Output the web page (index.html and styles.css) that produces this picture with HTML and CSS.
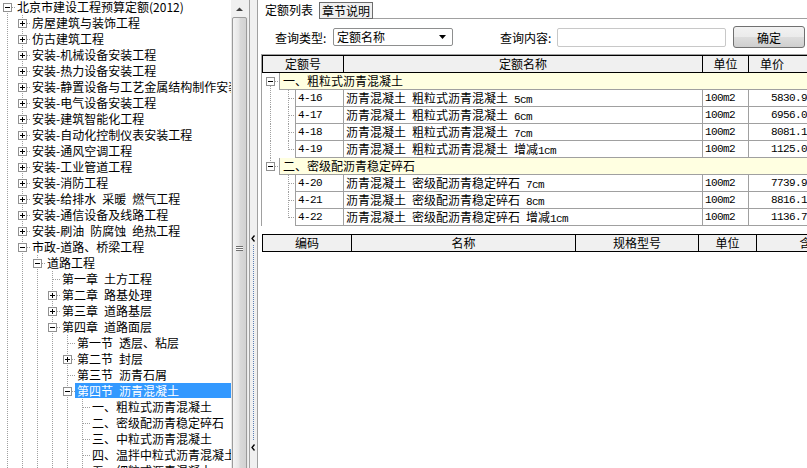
FILE: index.html
```html
<!DOCTYPE html>
<html lang="zh-CN">
<head>
<meta charset="utf-8">
<title>定额查询</title>
<link rel="stylesheet" href="styles.css">
</head>
<body>
<div class="app">
  <div class="side">
    <div class="tree">
      <div class="tr"><i class="c r"><b class="bx m"></b></i><span class="lb">北京市建设工程预算定额(2012)</span></div>
      <div class="tr"><i class="c v"></i><i class="c t"><b class="bx p"></b></i><span class="lb">房屋建筑与装饰工程</span></div>
      <div class="tr"><i class="c v"></i><i class="c t"><b class="bx p"></b></i><span class="lb">仿古建筑工程</span></div>
      <div class="tr"><i class="c v"></i><i class="c t"><b class="bx p"></b></i><span class="lb">安装-机械设备安装工程</span></div>
      <div class="tr"><i class="c v"></i><i class="c t"><b class="bx p"></b></i><span class="lb">安装-热力设备安装工程</span></div>
      <div class="tr"><i class="c v"></i><i class="c t"><b class="bx p"></b></i><span class="lb">安装-静置设备与工艺金属结构制作安装工程</span></div>
      <div class="tr"><i class="c v"></i><i class="c t"><b class="bx p"></b></i><span class="lb">安装-电气设备安装工程</span></div>
      <div class="tr"><i class="c v"></i><i class="c t"><b class="bx p"></b></i><span class="lb">安装-建筑智能化工程</span></div>
      <div class="tr"><i class="c v"></i><i class="c t"><b class="bx p"></b></i><span class="lb">安装-自动化控制仪表安装工程</span></div>
      <div class="tr"><i class="c v"></i><i class="c t"><b class="bx p"></b></i><span class="lb">安装-通风空调工程</span></div>
      <div class="tr"><i class="c v"></i><i class="c t"><b class="bx p"></b></i><span class="lb">安装-工业管道工程</span></div>
      <div class="tr"><i class="c v"></i><i class="c t"><b class="bx p"></b></i><span class="lb">安装-消防工程</span></div>
      <div class="tr"><i class="c v"></i><i class="c t"><b class="bx p"></b></i><span class="lb">安装-给排水 采暖 燃气工程</span></div>
      <div class="tr"><i class="c v"></i><i class="c t"><b class="bx p"></b></i><span class="lb">安装-通信设备及线路工程</span></div>
      <div class="tr"><i class="c v"></i><i class="c t"><b class="bx p"></b></i><span class="lb">安装-刷油 防腐蚀 绝热工程</span></div>
      <div class="tr"><i class="c v"></i><i class="c t"><b class="bx m"></b></i><span class="lb">市政-道路、桥梁工程</span></div>
      <div class="tr"><i class="c v"></i><i class="c v"></i><i class="c t"><b class="bx m"></b></i><span class="lb">道路工程</span></div>
      <div class="tr"><i class="c v"></i><i class="c v"></i><i class="c v"></i><i class="c t"></i><span class="lb">第一章 土方工程</span></div>
      <div class="tr"><i class="c v"></i><i class="c v"></i><i class="c v"></i><i class="c t"><b class="bx p"></b></i><span class="lb">第二章 路基处理</span></div>
      <div class="tr"><i class="c v"></i><i class="c v"></i><i class="c v"></i><i class="c t"><b class="bx p"></b></i><span class="lb">第三章 道路基层</span></div>
      <div class="tr"><i class="c v"></i><i class="c v"></i><i class="c v"></i><i class="c t"><b class="bx m"></b></i><span class="lb">第四章 道路面层</span></div>
      <div class="tr"><i class="c v"></i><i class="c v"></i><i class="c v"></i><i class="c v"></i><i class="c t"></i><span class="lb">第一节 透层、粘层</span></div>
      <div class="tr"><i class="c v"></i><i class="c v"></i><i class="c v"></i><i class="c v"></i><i class="c t"><b class="bx p"></b></i><span class="lb">第二节 封层</span></div>
      <div class="tr"><i class="c v"></i><i class="c v"></i><i class="c v"></i><i class="c v"></i><i class="c t"></i><span class="lb">第三节 沥青石屑</span></div>
      <div class="tr"><i class="c v"></i><i class="c v"></i><i class="c v"></i><i class="c v"></i><i class="c t"><b class="bx m"></b></i><span class="lb sel">第四节 沥青混凝土</span></div>
      <div class="tr"><i class="c v"></i><i class="c v"></i><i class="c v"></i><i class="c v"></i><i class="c v"></i><i class="c t"></i><span class="lb">一、粗粒式沥青混凝土</span></div>
      <div class="tr"><i class="c v"></i><i class="c v"></i><i class="c v"></i><i class="c v"></i><i class="c v"></i><i class="c t"></i><span class="lb">二、密级配沥青稳定碎石</span></div>
      <div class="tr"><i class="c v"></i><i class="c v"></i><i class="c v"></i><i class="c v"></i><i class="c v"></i><i class="c t"></i><span class="lb">三、中粒式沥青混凝土</span></div>
      <div class="tr"><i class="c v"></i><i class="c v"></i><i class="c v"></i><i class="c v"></i><i class="c v"></i><i class="c t"></i><span class="lb">四、温拌中粒式沥青混凝土</span></div>
      <div class="tr"><i class="c v"></i><i class="c v"></i><i class="c v"></i><i class="c v"></i><i class="c v"></i><i class="c t"></i><span class="lb">五、细粒式沥青混凝土</span></div>
    </div>
    <div class="vscroll">
      <div class="sb-up"><svg width="7" height="4" viewBox="0 0 7 4"><path d="M0 4H7L3.5 0.5Z" fill="#404040"/></svg></div>
      <div class="sb-thumb"><span class="grip"></span></div>
    </div>
  </div>

  <div class="splitter">
    <div class="split-grip">
      <svg class="chev" width="5" height="7" viewBox="0 0 5 7"><path d="M3.5 0.5L1 3.5L3.5 6.5" stroke="#000" stroke-width="1.3" fill="none"/></svg>
      <span class="split-dots"></span>
      <svg class="chev" width="5" height="7" viewBox="0 0 5 7"><path d="M3.5 0.5L1 3.5L3.5 6.5" stroke="#000" stroke-width="1.3" fill="none"/></svg>
    </div>
  </div>

  <div class="main">
    <div class="tabs">
      <span class="tab on">定额列表</span>
      <span class="tab off">章节说明</span>
      <span class="tab-rest"></span>
    </div>

    <div class="query">
      <span class="qlabel">查询类型:</span>
      <div class="combo"><span class="combo-text">定额名称</span><svg width="7" height="4" viewBox="0 0 7 4"><path d="M0 0H7L3.5 4Z" fill="#000"/></svg></div>
      <span class="qlabel q2">查询内容:</span>
      <div class="edit"></div>
      <div class="btn">确定</div>
    </div>

    <div class="grid1">
      <div class="ghead">
        <span class="gh w-id">定额号</span>
        <span class="gh w-name">定额名称</span>
        <span class="gh w-unit">单位</span>
        <span class="gh w-price price-h">单价</span>
        <span class="gh w-fill"></span>
      </div>

      <div class="grp"><i class="gt next"><b class="bx m"></b></i><span class="gcell">一、粗粒式沥青混凝土</span></div>
      <div class="drow"><i class="dt pv mid"></i><span class="dc d-id en">4-16</span><span class="dc w-name">沥青混凝土 粗粒式沥青混凝土 <span class="en">5cm</span></span><span class="dc w-unit en">100m2</span><span class="dc w-price num en">5830.90</span><span class="dc w-fill"></span></div>
      <div class="drow"><i class="dt pv mid"></i><span class="dc d-id en">4-17</span><span class="dc w-name">沥青混凝土 粗粒式沥青混凝土 <span class="en">6cm</span></span><span class="dc w-unit en">100m2</span><span class="dc w-price num en">6956.04</span><span class="dc w-fill"></span></div>
      <div class="drow"><i class="dt pv mid"></i><span class="dc d-id en">4-18</span><span class="dc w-name">沥青混凝土 粗粒式沥青混凝土 <span class="en">7cm</span></span><span class="dc w-unit en">100m2</span><span class="dc w-price num en">8081.14</span><span class="dc w-fill"></span></div>
      <div class="drow"><i class="dt pv last"></i><span class="dc d-id en">4-19</span><span class="dc w-name">沥青混凝土 粗粒式沥青混凝土 增减<span class="en">1cm</span></span><span class="dc w-unit en">100m2</span><span class="dc w-price num en">1125.08</span><span class="dc w-fill"></span></div>

      <div class="grp"><i class="gt prev"><b class="bx m"></b></i><span class="gcell">二、密级配沥青稳定碎石</span></div>
      <div class="drow"><i class="dt mid"></i><span class="dc d-id en">4-20</span><span class="dc w-name">沥青混凝土 密级配沥青稳定碎石 <span class="en">7cm</span></span><span class="dc w-unit en">100m2</span><span class="dc w-price num en">7739.90</span><span class="dc w-fill"></span></div>
      <div class="drow"><i class="dt mid"></i><span class="dc d-id en">4-21</span><span class="dc w-name">沥青混凝土 密级配沥青稳定碎石 <span class="en">8cm</span></span><span class="dc w-unit en">100m2</span><span class="dc w-price num en">8816.19</span><span class="dc w-fill"></span></div>
      <div class="drow"><i class="dt last"></i><span class="dc d-id en">4-22</span><span class="dc w-name">沥青混凝土 密级配沥青稳定碎石 增减<span class="en">1cm</span></span><span class="dc w-unit en">100m2</span><span class="dc w-price num en">1136.70</span><span class="dc w-fill"></span></div>
    </div>

    <div class="grid2">
      <div class="ghead">
        <span class="gh w-code">编码</span>
        <span class="gh w-mname">名称</span>
        <span class="gh w-spec">规格型号</span>
        <span class="gh w-munit">单位</span>
        <span class="gh w-qty">含量</span>
        <span class="gh w-fill"></span>
      </div>
    </div>
  </div>
</div>
</body>
</html>
```

FILE: styles.css
```css
html, body {
  margin: 0;
  padding: 0;
  overflow: hidden;
}

body {
  width: 807px;
  height: 468px;
  font-family: "Noto Sans CJK SC", sans-serif;
  font-size: 12px;
  color: #000;
  background: #f0f0f0;
  word-spacing: 3.3px;
}

.app {
  display: flex;
  width: 807px;
  height: 468px;
  overflow: hidden;
}

/* ---------- left tree ---------- */
.side {
  width: 249px;
  flex: none;
  display: flex;
  background: #f0f0f0;
}

.tree {
  width: 231px;
  flex: none;
  background: #fff;
  overflow: hidden;
  padding-top: 0;
}

.tr {
  display: flex;
  height: 16px;
  line-height: 16px;
  white-space: nowrap;
}

.tr:first-child {
  margin-top: -1px;
}

.c {
  --dv: repeating-linear-gradient(to bottom, #a0a0a0 0 1px, transparent 1px 2px);
  --dh: repeating-linear-gradient(to right, #a0a0a0 0 1px, transparent 1px 2px);
  width: 15px;
  height: 16px;
  flex: none;
  box-sizing: border-box;
  padding: 4px 0 0 3px;
}

.c.v {
  background: var(--dv) 7px 0 / 1px 16px no-repeat;
}

.c.t {
  background: var(--dv) 7px 0 / 1px 16px no-repeat,
              var(--dh) 8px 8px / 7px 1px no-repeat;
}

.c.r {
  background: var(--dv) 7px 8px / 1px 8px no-repeat,
              var(--dh) 8px 8px / 7px 1px no-repeat;
}

.bx {
  display: block;
  position: relative;
  width: 9px;
  height: 9px;
  box-sizing: border-box;
  border: 1px solid #919191;
  background: #fff;
}

.bx::before {
  content: "";
  position: absolute;
  left: 1px;
  top: 3px;
  width: 5px;
  height: 1px;
  background: #000;
}

.bx.p::after {
  content: "";
  position: absolute;
  left: 3px;
  top: 1px;
  width: 1px;
  height: 5px;
  background: #000;
}

.lb {
  padding: 0 2px;
  height: 15px;
  line-height: 16px;
}

.lb.sel {
  flex: 1;
  background: #3399ff;
  color: #fff;
}

/* ---------- scrollbar ---------- */
.vscroll {
  width: 17px;
  flex: none;
  display: flex;
  flex-direction: column;
  background: #e9e9e9;
  overflow: hidden;
}

.sb-up {
  height: 17px;
  flex: none;
  display: flex;
  align-items: center;
  justify-content: center;
  background: #f0f0f0;
}

.sb-thumb {
  flex: none;
  height: 462px;
  margin: 0 1px;
  box-sizing: border-box;
  border: 1px solid #9b9b9b;
  border-radius: 2px;
  background: linear-gradient(to right, #f4f4f4, #e6e6e6 45%, #d9d9d9 55%, #d2d2d2);
  display: flex;
  align-items: center;
  justify-content: center;
}

.grip {
  width: 7px;
  height: 5px;
  background: repeating-linear-gradient(to bottom, #707070 0 1px, #f8f8f8 1px 2px);
}

/* ---------- splitter ---------- */
.splitter {
  width: 9px;
  flex: none;
  box-sizing: border-box;
  border-left: 1px solid #a0a0a0;
  border-right: 1px solid #a0a0a0;
  background: #f0f0f0;
}

.split-grip {
  margin-top: 235px;
  height: 216px;
  display: flex;
  flex-direction: column;
  align-items: center;
  justify-content: space-between;
}

.chev {
  display: block;
  flex: none;
}

.split-dots {
  flex: 1;
  width: 1px;
  margin: 3px 0;
  background: repeating-linear-gradient(to bottom, #5a7fb5 0 1px, transparent 1px 2px);
}

/* ---------- main panel ---------- */
.main {
  flex: 1;
  min-width: 0;
  background: #fff;
  overflow: hidden;
  display: flex;
  flex-direction: column;
}

.tabs {
  height: 19px;
  flex: none;
  display: flex;
  align-items: flex-start;
}

.tab {
  line-height: 15px;
  white-space: nowrap;
}

.tab.on {
  padding: 2px 6px 0 7px;
}

.tab.off {
  margin-top: 2px;
  padding: 0 2px;
  height: 15px;
  border: 1px solid #6d6d6d;
  background: #f0f0f0;
}

.tab-rest {
  flex: 1;
  height: 18px;
  border-bottom: 1px solid #a0a0a0;
}

.query {
  height: 22px;
  margin-top: 7px;
  flex: none;
  display: flex;
  align-items: center;
  white-space: nowrap;
}

.qlabel {
  margin-left: 17px;
  width: 58px;
}

.qlabel.q2 {
  margin-left: 47px;
  width: 57px;
}

.combo {
  width: 120px;
  height: 18px;
  box-sizing: border-box;
  border: 1px solid #8e8f8f;
  border-radius: 2px;
  background: #fff;
  display: flex;
  align-items: center;
  justify-content: space-between;
  padding: 0 6px 0 3px;
  line-height: 16px;
}

.edit {
  width: 169px;
  height: 19px;
  box-sizing: border-box;
  border: 1px solid #c8c8c8;
  border-radius: 2px;
  background: #fff;
}

.btn {
  margin-left: 7px;
  width: 72px;
  height: 22px;
  box-sizing: border-box;
  border: 1px solid #707070;
  border-radius: 3px;
  background: linear-gradient(to bottom, #f2f2f2 0, #ebebeb 50%, #dddddd 51%, #cfcfcf 100%);
  display: flex;
  align-items: center;
  justify-content: center;
}

/* ---------- grids ---------- */
.grid1 {
  margin: 6px 0 0 3px;
  width: 620px;
  flex: none;
  border-left: 1px solid #a0a0a0;
  border-top: 1px solid #a0a0a0;
}

.ghead {
  display: flex;
  height: 18px;
  box-sizing: border-box;
  border: 1px solid #000;
  border-right: none;
  background: #f0f0f0;
  line-height: 16px;
  white-space: nowrap;
}

.gh {
  flex: none;
  box-sizing: border-box;
  border-right: 1px solid #000;
  text-align: center;
  overflow: hidden;
}

.gh.w-fill {
  flex: 1;
  border-right: none;
}

.w-id { width: 81px; }
.w-name { width: 359px; }
.w-unit { width: 46px; }
.w-price { width: 70px; }

.gh.price-h {
  text-align: left;
  padding-left: 11px;
}

.grp, .drow {
  display: flex;
  height: 17px;
  line-height: 16px;
  white-space: nowrap;
}

.gt, .dt {
  --dv: repeating-linear-gradient(to bottom, #a0a0a0 0 1px, transparent 1px 2px);
  --dh: repeating-linear-gradient(to right, #a0a0a0 0 1px, transparent 1px 2px);
  flex: none;
  height: 17px;
  box-sizing: border-box;
}

.gt {
  width: 17px;
  padding: 4px 0 0 4px;
}

.gt.next {
  background: var(--dv) 8px 9px / 1px 8px no-repeat,
              var(--dh) 13px 8px / 4px 1px no-repeat;
}

.gt.prev {
  background: var(--dv) 8px 0 / 1px 8px no-repeat,
              var(--dh) 13px 8px / 4px 1px no-repeat;
}

.dt {
  width: 33px;
}

.dt.mid {
  background: var(--dv) 26px 0 / 1px 17px no-repeat,
              var(--dh) 27px 8px / 6px 1px no-repeat;
}

.dt.last {
  background: var(--dv) 26px 0 / 1px 9px no-repeat,
              var(--dh) 27px 8px / 6px 1px no-repeat;
}

.dt.pv.mid {
  background: var(--dv) 8px 0 / 1px 17px no-repeat,
              var(--dv) 26px 0 / 1px 17px no-repeat,
              var(--dh) 27px 8px / 6px 1px no-repeat;
}

.dt.pv.last {
  background: var(--dv) 8px 0 / 1px 17px no-repeat,
              var(--dv) 26px 0 / 1px 9px no-repeat,
              var(--dh) 27px 8px / 6px 1px no-repeat;
}

.gcell {
  flex: 1;
  box-sizing: border-box;
  border-left: 1px solid #a0a0a0;
  border-bottom: 1px solid #a0a0a0;
  background: #ffffe1;
  padding-left: 3px;
}

.dc {
  flex: none;
  box-sizing: border-box;
  border-right: 1px solid #a0a0a0;
  border-bottom: 1px solid #a0a0a0;
  padding-left: 2px;
  overflow: hidden;
}

.dc.d-id {
  width: 49px;
  border-left: 1px solid #a0a0a0;
}

.dc.num {
  text-align: right;
  padding: 0 5px 0 0;
}

.dc.w-fill {
  flex: 1;
  border-right: none;
}

.en {
  font-family: "Liberation Mono", monospace;
  font-size: 11px;
  letter-spacing: -0.6px;
  word-spacing: 0;
}

.grid2 {
  margin: 8px 0 0 4px;
  width: 620px;
  flex: none;
}

.w-code { width: 89px; }
.w-mname { width: 224px; }
.w-spec { width: 123px; }
.w-munit { width: 58px; }
.w-qty { width: 110px; }
```
